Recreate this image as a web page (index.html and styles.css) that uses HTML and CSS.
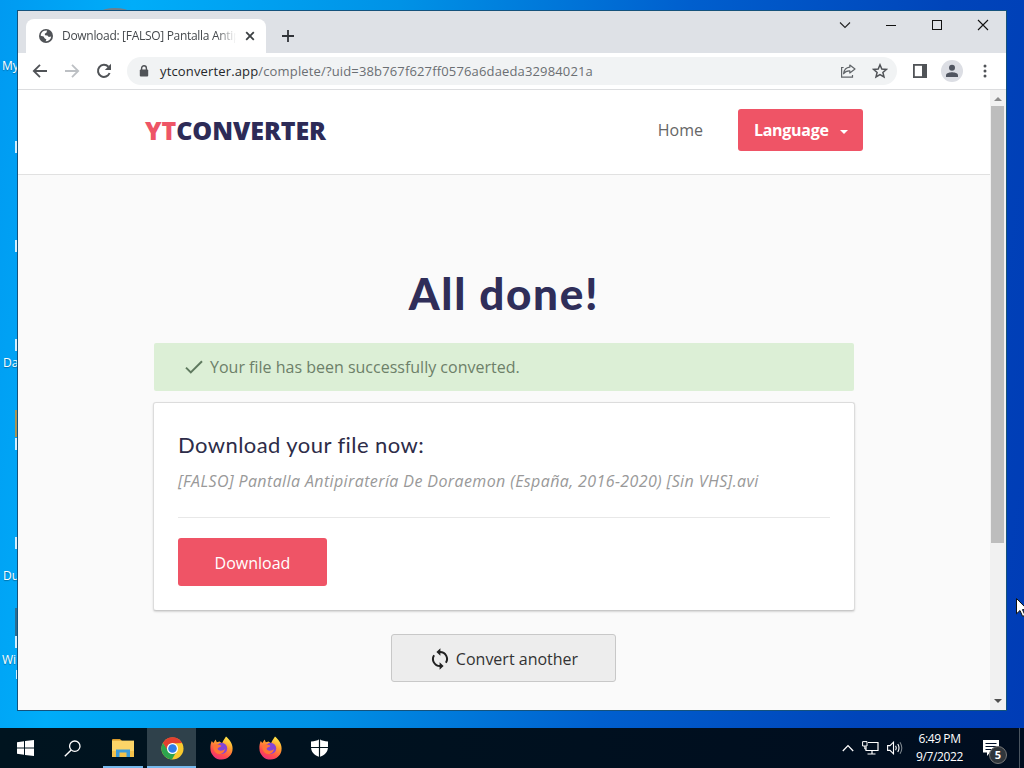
FILE: index.html
```html
<!DOCTYPE html>
<html lang="en">
<head>
  <meta charset="UTF-8" />
  <meta name="viewport" content="width=device-width, initial-scale=1.0" />
  <title>Download: [FALSO] Pantalla Antipiratería</title>
  <link rel="stylesheet" href="styles.css">
</head>
<body>
  <div class="desktop">
    <!-- desktop icons, mostly covered by the window -->
    <span class="shortcut s1">My</span>
    <span class="shortcut s2">Da</span>
    <span class="shortcut s3">Du</span>
    <span class="shortcut s4">Wi</span>
    <i class="edge e1"></i>
    <i class="edge e2"></i>
    <i class="edge e3"></i>
    <i class="edge e4"></i>
    <i class="edge e5"></i>
    <i class="edge e6"></i>
    <i class="edge e7"></i>
    <i class="edge orange"></i>
    <i class="edge dark"></i>
    <i class="top-icon"></i>

    <div class="window">
      <div class="tabstrip">
        <div class="tab">
          <svg class="globe" width="14" height="14" viewBox="0 0 14 14"><circle cx="7" cy="7" r="7" fill="#505357"/><path d="M5.2 1.8 L8 1.6 L7.6 3.6 L5.8 4.8 L6 6.2 L8.4 6.4 L9.8 8 L12.2 7.4 A5.4 5.4 0 0 1 6.6 12.3 L7.4 10.4 L5.6 9.2 L4.6 7.4 L1.7 6.8 A5.4 5.4 0 0 1 5.2 1.8Z" fill="#fff"/></svg>
          <span class="tab-title">Download: [FALSO] Pantalla Antipi</span>
          <svg width="10" height="10" viewBox="0 0 10 10"><path d="M1.2 1.2 L8.8 8.8 M8.8 1.2 L1.2 8.8" stroke="#3c4043" stroke-width="1.8"/></svg>
        </div>
        <svg class="new-tab" width="12" height="12" viewBox="0 0 12 12"><path d="M6 0 V12 M0 6 H12" stroke="#303338" stroke-width="1.8"/></svg>
        <div class="controls">
          <svg width="12" height="12" viewBox="0 0 12 12"><path d="M1 3.5 L6 8.5 L11 3.5" fill="none" stroke="#222" stroke-width="1.1"/></svg>
          <svg width="12" height="12" viewBox="0 0 12 12"><path d="M1 6.5 H11" stroke="#111"/></svg>
          <svg width="12" height="12" viewBox="0 0 12 12"><rect x="1.5" y="1.5" width="9" height="9" fill="none" stroke="#111"/></svg>
          <svg width="12" height="12" viewBox="0 0 12 12"><path d="M1 1 L11 11 M11 1 L1 11" stroke="#111" stroke-width="1.1"/></svg>
        </div>
      </div>

      <div class="toolbar">
        <svg class="nav" width="16" height="16" viewBox="0 0 16 16"><path d="M15 8 H2 M8 1.8 L1.8 8 L8 14.2" fill="none" stroke="#505357" stroke-width="1.8"/></svg>
        <svg class="nav" width="16" height="16" viewBox="0 0 16 16"><path d="M1 8 H14 M8 1.8 L14.2 8 L8 14.2" fill="none" stroke="#bdc0c4" stroke-width="1.8"/></svg>
        <svg class="nav" width="16" height="16" viewBox="0 0 16 16"><path d="M13.6 10 A6 6 0 1 1 12.4 3.8" fill="none" stroke="#505357" stroke-width="2"/><path d="M15 .8 V7 H8.8Z" fill="#505357"/></svg>
        <div class="omnibox">
          <svg width="10" height="12" viewBox="0 0 10 12"><path d="M2.6 5 V3.2 A2.4 2.4 0 0 1 7.4 3.2 V5" fill="none" stroke="#505357" stroke-width="1.4"/><rect x=".8" y="4.4" width="8.4" height="7.2" rx="1" fill="#505357"/></svg>
          <span class="url"><b>ytconverter.app</b>/complete/?uid=38b767f627ff0576a6daeda32984021a</span>
          <svg class="share" width="16" height="14" viewBox="0 0 16 14"><path d="M3.6 3.5 H1.6 V13.2 H12.5 V11" fill="none" stroke="#606468" stroke-width="1.2"/><path d="M9.8 1 L15 5 L9.8 9 V6.8 C7 6.6 5 7.6 3.6 9.8 C4 6 6 3.6 9.8 3.2Z" fill="none" stroke="#606468" stroke-width="1.2" stroke-linejoin="round"/></svg>
          <svg width="16" height="16" viewBox="0 0 16 16"><path d="M8 1.8 L9.8 6 L14.4 6.4 L10.9 9.4 L12 13.9 L8 11.5 L4 13.9 L5.1 9.4 L1.6 6.4 L6.2 6Z" fill="none" stroke="#505357" stroke-width="1.5"/></svg>
        </div>
        <svg class="panel" width="14" height="14" viewBox="0 0 14 14"><rect x=".9" y=".9" width="12.2" height="12.2" fill="#fff" stroke="#505357" stroke-width="1.8"/><rect x="9" y="0" width="5" height="14" fill="#505357"/></svg>
        <svg class="avatar" width="22" height="22" viewBox="0 0 22 22"><circle cx="11" cy="11" r="11" fill="#dcdee4"/><circle cx="11" cy="7.8" r="3" fill="#505560"/><path d="M5 17 V15.2 C5 13 9 12.2 11 12.2 S17 13 17 15.2 V17Z" fill="#505560"/></svg>
        <svg width="4" height="14" viewBox="0 0 4 14"><circle cx="2" cy="2" r="1.5" fill="#505357"/><circle cx="2" cy="7" r="1.5" fill="#505357"/><circle cx="2" cy="12" r="1.5" fill="#505357"/></svg>
      </div>

      <div class="viewport">
        <div class="page">
          <header>
            <div class="header-inner">
              <div class="logo"><span>YT</span>CONVERTER</div>
              <nav>
                <a class="home">Home</a>
                <a class="language">Language <i class="caret"></i></a>
              </nav>
            </div>
          </header>
          <main>
            <h1>All done!</h1>
            <div class="alert">
              <svg width="18" height="14" viewBox="0 0 18 14"><path d="M1 7.6 L5.8 12.4 L17 1.2" fill="none" stroke="#5f7a5f" stroke-width="2"/></svg>
              <span>Your file has been successfully converted.</span>
            </div>
            <div class="card">
              <h2>Download your file now:</h2>
              <p class="filename">[FALSO] Pantalla Antipiratería De Doraemon (España, 2016-2020) [Sin VHS].avi</p>
              <a class="btn-download">Download</a>
            </div>
            <a class="btn-again">
              <svg width="18" height="22" viewBox="0 0 18 22"><path d="M9 4 A7 7 0 0 1 14.9 14.8 M9 18 A7 7 0 0 1 3.1 7.2" fill="none" stroke="#222" stroke-width="2"/><path d="M9.4 .2 V7.8 L5.4 4Z M8.6 14.2 V21.8 L12.6 18Z" fill="#222"/></svg>
              <span>Convert another</span>
            </a>
          </main>
        </div>
        <div class="scrollbar">
          <i class="arrow-up"></i>
          <i class="thumb"></i>
          <i class="arrow-down"></i>
        </div>
      </div>
    </div>

    <svg class="cursor" width="12" height="20" viewBox="0 0 12 20"><path d="M.5 .5 V15.8 L4 12.5 L6.6 18.4 L9 17.3 L6.5 11.6 H11.5Z" fill="#fff" stroke="#111"/></svg>
  </div>

  <footer class="taskbar">
    <div class="task">
      <svg width="17" height="16" viewBox="0 0 17 16"><path d="M0 2.3 L7 1.3 V7.6 H0Z M8 1.1 L17 0 V7.6 H8Z M0 8.5 H7 V14.8 L0 13.8Z M8 8.5 H17 V16 L8 14.9Z" fill="#fff"/></svg>
    </div>
    <div class="task search">
      <svg width="17" height="17" viewBox="0 0 17 17"><circle cx="10.8" cy="6.2" r="5.2" fill="none" stroke="#fff" stroke-width="1.3"/><path d="M7.2 9.9 L.8 16.3" stroke="#fff" stroke-width="1.4"/></svg>
    </div>
    <div class="task running">
      <svg width="22" height="18" viewBox="0 0 22 18"><path d="M0 1 Q0 0 1 0 H8 L10 2 H0Z" fill="#d99a2b"/><rect y="1.6" width="22" height="16.4" fill="#fbd468"/><rect y="12" width="22" height="6" fill="#f4c24b"/><path d="M4 18 V10.5 H18 V18 H14.5 V13.5 H7.5 V18Z" fill="#3d9bd9"/></svg>
    </div>
    <div class="task active">
      <svg width="23" height="23" viewBox="0 0 24 24"><circle cx="12" cy="12" r="11.5" fill="#f9c92e"/><path d="M2 6.2 A11.5 11.5 0 0 1 22 6.2 L12 6.8 L7 15Z" fill="#e33f30"/><path d="M2 6.2 A11.5 11.5 0 0 0 11.4 23.5 L16.5 14.6 L7.5 14.6Z" fill="#2da44e"/><circle cx="12" cy="12" r="5.8" fill="#fff"/><circle cx="12" cy="12" r="4.5" fill="#2f7de9"/></svg>
    </div>
    <div class="task">
      <svg width="23" height="24" viewBox="0 0 23 24">
        <defs>
          <linearGradient id="flame" x1=".8" y1="0" x2=".3" y2="1"><stop offset="0" stop-color="#fff04a"/><stop offset=".4" stop-color="#ff9a2e"/><stop offset=".75" stop-color="#ff4a4f"/><stop offset="1" stop-color="#ee2f78"/></linearGradient>
          <g id="fox"><path d="M1.8 5 L3.3 7 L5.6 3.4 L6.8 6.2 L9.6 5.4 L12 7.2 L13.4 4.4 L16 .4 C19 3 22.6 7 22.6 12.4 A11.1 11.1 0 0 1 .4 12.6 C.2 9.6 .8 7 1.8 5Z" fill="url(#flame)"/><circle cx="11.6" cy="12.4" r="5.6" fill="#8544d6"/><path d="M3.5 9 C6 8 9 8.4 11.4 9.8 C10.4 11.8 8 11 7.6 13 C8.6 15.4 13 15 15 13 C14.4 17.4 9.6 19.4 6 17 C3.6 15 3 12 3.5 9Z" fill="#ff7636"/></g>
        </defs>
        <use href="#fox"/>
      </svg>
    </div>
    <div class="task">
      <svg width="23" height="24" viewBox="0 0 23 24"><use href="#fox"/></svg>
    </div>
    <div class="task">
      <svg width="17" height="18" viewBox="0 0 17 18"><path d="M8.5 0 C11 1.8 13.5 2.4 17 2.4 V8 C17 13 13.5 16.5 8.5 18 C3.5 16.5 0 13 0 8 V2.4 C3.5 2.4 6 1.8 8.5 0Z" fill="#fff"/><path d="M8.5 0 V18 M0 8.5 H17" stroke="#00121b" stroke-width="1.2"/></svg>
    </div>

    <div class="tray">
      <svg width="12" height="8" viewBox="0 0 12 8"><path d="M.8 7 L6 1.6 L11.2 7" fill="none" stroke="#fff" stroke-width="1.3"/></svg>
      <svg width="17" height="14" viewBox="0 0 17 14"><path d="M6 1.5 H16 V9.5 H4 V5.5 M10 9.5 V13 M5.5 13 H13.5" fill="none" stroke="#fff" stroke-width="1.2"/><path d="M.6 .6 H5 V5 H.6Z M2.8 5 V8 H4" fill="none" stroke="#fff"/></svg>
      <svg width="16" height="14" viewBox="0 0 16 14"><path d="M.6 4.6 H3 L6.5 1.2 V12.8 L3 9.4 H.6Z" fill="none" stroke="#fff" stroke-width="1.1"/><path d="M8.6 4.8 Q10 7 8.6 9.2 M10.8 3 Q13.2 7 10.8 11" fill="none" stroke="#fff" stroke-width="1.1"/><path d="M13 1.2 Q16.6 7 13 12.8" fill="none" stroke="#7b858c" stroke-width="1.1"/></svg>
    </div>
    <div class="clock">
      <span>6:49 PM</span>
      <span>9/7/2022</span>
    </div>
    <div class="notifications">
      <svg width="16" height="16" viewBox="0 0 16 16"><path d="M0 0 H16 V12.5 H7 L4 16 V12.5 H0Z" fill="#fff"/><path d="M2.5 3.5 H13.5 M2.5 6.5 H13.5 M2.5 9.5 H10" stroke="#00102a" stroke-width="1.2"/></svg>
      <span class="badge">5</span>
    </div>
  </footer>
</body>
</html>
```
FILE: styles.css
```css
* { margin: 0; padding: 0; box-sizing: border-box; }
svg { display: block; flex: none; }
body {
  width: 1024px; height: 768px; overflow: hidden;
  display: flex; flex-direction: column;
  font-family: "Open Sans", sans-serif;
  color: #333;
}

/* Desktop */
.desktop {
  position: relative; flex: 1; overflow: hidden;
  background: linear-gradient(97deg, #009af1 0%, #00adf9 12%, #0092e6 36%, #005fce 62%, #0045ba 85%, #003cb6 100%);
}
.shortcut { position: absolute; left: 3px; color: #fff; font-size: 12px; line-height: 16px; text-shadow: 0 1px 1px rgba(0,0,0,0.3); }
.s1 { left: 2px; top: 58px; }
.s2 { top: 355px; }
.s3 { top: 568px; }
.s4 { left: 2px; top: 652px; }
.edge { position: absolute; left: 15px; width: 2px; height: 12px; background: #d5eefb; }
.e1 { top: 141px; }
.e2 { top: 240px; }
.e3 { top: 339px; }
.e4 { top: 438px; }
.e5 { top: 537px; }
.e6 { top: 636px; }
.e7 { left: 16px; width: 1px; top: 670px; height: 9px; }
.edge.orange { top: 410px; height: 27px; background: #a59455; }
.edge.dark { top: 608px; height: 28px; background: #2d6d90; }
.top-icon { position: absolute; left: 102px; top: 8px; width: 26px; height: 6px; border-radius: 50%; background: #6e7f8c; }

/* Browser window */
.window {
  position: absolute; left: 17px; top: 10px;
  width: 990px; height: 701px;
  display: flex; flex-direction: column;
  border: 1px solid #14527c; background: #fff;
}
.tabstrip { display: flex; align-items: center; height: 42px; padding: 8px 17px 0 8px; background: #dee1e6; }
.tab {
  display: flex; align-items: center; align-self: stretch;
  width: 240px; padding: 0 11px 0 13px;
  background: #fff; border-radius: 8px 8px 0 0;
}
.tab-title {
  flex: 1; margin: -2px 9px 0; overflow: hidden; white-space: nowrap;
  font-size: 12px; letter-spacing: -0.3px; color: #45494d;
  -webkit-mask-image: linear-gradient(90deg, #000 89%, transparent);
  mask-image: linear-gradient(90deg, #000 89%, transparent);
}
.new-tab { margin-left: 16px; }
.controls { display: flex; gap: 34px; margin-left: auto; margin-top: -22px; }
.toolbar { display: flex; align-items: center; height: 37px; padding: 0 19px 0 14px; border-bottom: 1px solid #dcdddf; }
.nav { margin-right: 16px; }
.omnibox { display: flex; align-items: center; width: 771px; height: 28px; padding: 0 9px 0 12px; margin-left: -1px; border-radius: 14px; background: #f1f3f4; }
.url { flex: 1; margin-left: 11px; font-size: 13px; letter-spacing: 0.15px; color: #6b6f73; white-space: nowrap; }
.url b { font-weight: 400; color: #25282b; }
.share { margin-right: 16px; }
.panel { margin-left: 16px; }
.avatar { margin: 0 20px 0 14px; }

/* Site */
.viewport { display: flex; flex: 1; }
.page { flex: 1; background: #fafafa; }
header { height: 85px; background: #fff; border-bottom: 1px solid #e1e1e1; }
.header-inner { display: flex; justify-content: space-between; align-items: center; width: 718px; height: 80px; margin: 0 auto; }
.logo { font-size: 25px; font-weight: 800; line-height: 34px; letter-spacing: -0.08px; color: #2d2b57; }
.logo span { color: #ee5566; }
nav { display: flex; align-items: center; }
.home { margin-right: 35px; font-size: 16px; color: #666; }
.language {
  display: flex; align-items: center; width: 125px; height: 42px; padding-left: 16px;
  border-radius: 3px; background: #ef5466;
  color: #fff; font-size: 16px; font-weight: 700; letter-spacing: -0.3px;
}
.caret { margin: 3px 0 0 11px; border: 4px solid transparent; border-top-color: #fff; border-bottom: 0; }
main { display: flex; flex-direction: column; align-items: center; width: 702px; margin: 0 auto; padding-top: 88px; }
h1 { height: 80px; font-family: Lato, sans-serif; font-size: 44px; font-weight: 900; line-height: 60px; letter-spacing: 1.7px; color: #2f2e59; }
.alert { display: flex; align-items: center; width: 700px; height: 48px; padding-left: 31px; border-radius: 2px; background: #dcefd6; color: #6d8069; font-size: 16px; }
.alert span { margin-left: 7px; }
.card {
  width: 702px; height: 209px; margin: 11px 0 23px; padding: 27px 24px 0;
  border: 1px solid #dcdcdc; border-bottom-color: #c8c8c8; border-radius: 3px;
  background: #fff; box-shadow: 0 1px 2px rgba(0,0,0,0.15);
}
h2 { font-family: Lato, sans-serif; font-size: 22px; font-weight: 400; line-height: 30px; letter-spacing: 0.43px; color: #2d2c48; }
.filename { height: 58px; padding-top: 9px; border-bottom: 1px solid #e8e8e8; font-size: 16px; line-height: 24px; letter-spacing: 0.39px; font-style: italic; color: #999; white-space: nowrap; }
.btn-download { display: flex; align-items: center; justify-content: center; width: 149px; height: 48px; margin-top: 20px; padding-top: 2px; border-radius: 3px; background: #ef5466; color: #fff; font-size: 16px; }
.btn-again { display: flex; align-items: center; justify-content: center; gap: 7px; width: 225px; height: 48px; margin-right: 1px; padding: 1px 0 0 2px; border: 1px solid #c8c8c8; border-radius: 3px; background: #ededed; font-size: 16px; }
.scrollbar { display: flex; flex-direction: column; align-items: center; width: 16px; padding-right: 1px; background: #f1f1f1; }
.arrow-up { margin: 7px 0 5px; border: 4px solid transparent; border-bottom-color: #8b8b8b; border-top: 0; }
.thumb { width: 13px; height: 437px; background: #bdbdbd; }
.arrow-down { margin: auto 0 7px; border: 4px solid transparent; border-top-color: #505050; border-bottom: 0; }
.cursor { position: absolute; left: 1016px; top: 598px; }

/* Taskbar */
.taskbar { display: flex; height: 40px; background: linear-gradient(90deg, #00141f, #000d1f); color: #fff; }
.task { display: flex; align-items: center; justify-content: center; width: 49px; border-bottom: 2px solid transparent; padding: 2px 0 0 1px; }
.search { padding-right: 4px; }
.task.running { background: linear-gradient(#76b9ed, #76b9ed) 5px 38px / 40px 2px no-repeat; background-origin: border-box; background-clip: border-box; }
.task.active { background: #2f414b; border-bottom-color: #76b9ed; }
.tray { display: flex; align-items: center; gap: 8px; margin-left: auto; }
.clock { display: flex; flex-direction: column; align-items: center; width: 73px; padding-top: 2px; font-size: 12px; line-height: 18px; letter-spacing: -0.4px; }
.notifications { position: relative; width: 48px; padding: 12px 0 0 7px; }
.notifications::after { content: ""; position: absolute; right: 4px; top: 0; width: 1px; height: 40px; background: #4a5560; }
.badge { position: absolute; left: 13px; top: 18px; width: 18px; height: 18px; border: 1px solid #777; border-radius: 50%; background: #30363c; font-size: 11px; line-height: 16px; font-weight: 700; text-align: center; }
```
